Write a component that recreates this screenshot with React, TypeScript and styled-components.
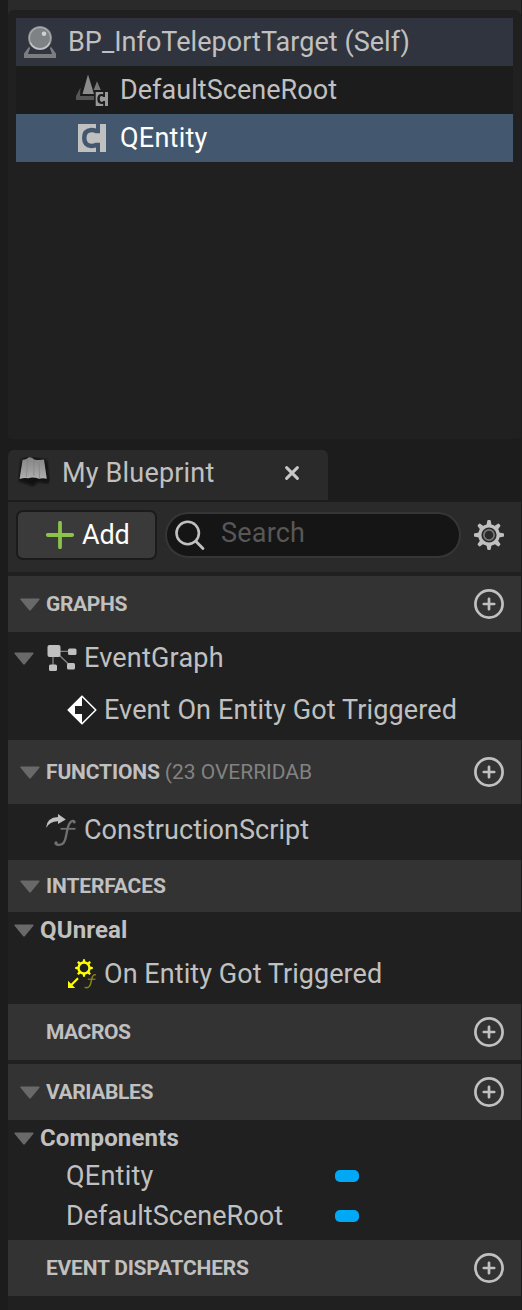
import React from "react";
import styled, { createGlobalStyle } from "styled-components";

const GlobalStyle = createGlobalStyle`
  *, *::before, *::after { box-sizing: border-box; }
  body {
    margin: 0;
    background: #1c1c1c;
    color: #c0c0c0;
    font-family: Roboto, "Liberation Sans", sans-serif;
    font-size: 27px;
  }
`;

const Editor = styled.main`
  width: 522px;
  height: 1310px;
  padding: 0 1px 0 8px;
  display: flex;
  flex-direction: column;
  overflow: hidden;
`;

const ComponentsPanel = styled.section`
  height: 439px;
  padding-top: 10px;
  background: linear-gradient(#2a2a2a 40px, #202020 40px);
  border-radius: 0 0 4px 4px;
`;

const TreeWell = styled.div`
  height: 429px;
  padding: 8px;
  border-radius: 6px;
  background: #202020;
`;

const TreeRow = styled.div<{ $bg: string; $indent: number; $gap: number; $selected?: boolean }>`
  height: 48px;
  display: flex;
  align-items: center;
  gap: ${(p) => p.$gap}px;
  padding-left: ${(p) => p.$indent}px;
  background: ${(p) => p.$bg};
  color: ${(p) => (p.$selected ? "#ffffff" : "#c0c0c0")};
`;

const Label = styled.span<{ $spacing?: number }>`
  line-height: 32px;
  white-space: nowrap;
  letter-spacing: ${(p) => p.$spacing ?? 0.04}px;
`;

const Tab = styled.div`
  width: 320px;
  height: 50px;
  margin-top: 11px;
  padding: 0 28px 4px 10px;
  display: flex;
  align-items: center;
  background: #2a2a2a;
  border-radius: 6px 6px 0 0;
`;

const TabTitle = styled(Label)`
  flex: 1;
  margin-left: 12px;
`;

const Toolbar = styled.div`
  height: 70px;
  margin-top: 2px;
  padding: 0 16px 4px 8px;
  display: flex;
  align-items: center;
  background: #2a2a2a;
`;

const AddButton = styled.button`
  width: 141px;
  height: 50px;
  padding: 0 0 0 28px;
  display: flex;
  align-items: center;
  gap: 8px;
  border: 2px solid #1b1b1b;
  border-radius: 7px;
  background: #3a3a3a;
  color: #ffffff;
  font: inherit;
`;

const SearchBox = styled.div`
  width: 296px;
  height: 46px;
  margin: 0 13px 0 8px;
  padding: 0 0 0 7px;
  display: flex;
  align-items: center;
  gap: 15px;
  border: 2px solid #363636;
  border-radius: 23px;
  background: #151515;
  color: #575757;
`;

const SearchLabel = styled(Label)`
  padding-bottom: 4px;
`;

const Sections = styled.div`
  flex: 1;
  padding-top: 4px;
  background: #202020;
`;

const Header = styled.header<{ $h: number; $gap?: number }>`
  height: ${(p) => p.$h}px;
  margin-top: ${(p) => p.$gap ?? 0}px;
  padding: 0 17px 0 12px;
  display: flex;
  align-items: center;
  background: #333333;
`;

const HeaderTitle = styled.h2<{ $spacing?: number }>`
  margin: 0 0 0 6px;
  font-size: 21px;
  font-weight: 700;
  line-height: 28px;
  letter-spacing: ${(p) => p.$spacing ?? 0}px;
  white-space: nowrap;
`;

const HeaderNote = styled.span`
  margin-left: 5px;
  color: #828282;
  font-size: 21px;
  line-height: 28px;
  letter-spacing: -0.02px;
  white-space: nowrap;
`;

const ArrowSlot = styled.span`
  width: 20px;
  height: 13px;
  display: flex;
`;

const Push = styled.span`
  margin-left: auto;
  display: flex;
`;

const ItemRow = styled.div<{ $h: number; $indent: number; $below?: number }>`
  height: ${(p) => p.$h}px;
  margin-bottom: ${(p) => p.$below ?? 0}px;
  padding-left: ${(p) => p.$indent}px;
  display: flex;
  align-items: center;
`;

const IconSlot = styled.span<{ $ml?: number; $mr: number }>`
  display: flex;
  margin: 0 ${(p) => p.$mr}px 0 ${(p) => p.$ml ?? 0}px;
`;

const Category = styled.h3`
  margin: 0 0 0 6px;
  font-size: 24px;
  font-weight: 700;
  line-height: 30px;
  letter-spacing: 0.15px;
`;

const VariableName = styled(Label)`
  width: 269px;
`;

const TypePill = styled.span`
  width: 24px;
  height: 12px;
  border-radius: 5px;
  background: #00a8f6;
`;

const Arrow = () => (
  <svg width="20" height="13" viewBox="0 0 20 13">
    <path d="M1.3 0.5H18.7Q20.3 0.7 19.2 2.1L11 11.9Q10 13 9 11.9L0.8 2.1Q-0.3 0.7 1.3 0.5Z" fill="#696969" />
  </svg>
);

const ActorIcon = () => (
  <svg width="32" height="32" viewBox="0 0 32 32">
    <path d="M5.2 20.5L0 27.5V32H32V27.5L26.8 20.5L26 22.5L28 28H4L6 22.5Z" fill="#7b7d80" />
    <circle cx="16" cy="12" r="12" fill="#7f8284" />
    <circle cx="16" cy="12" r="10.6" fill="#7f8284" stroke="#a9abac" strokeWidth="1.1" />
    <path d="M6.2 16.5A10.6 10.6 0 0 0 25.8 16.5" fill="none" stroke="#c6c7c8" strokeWidth="1.3" />
    <circle cx="20" cy="7.7" r="2.3" fill="#d0d0d0" />
  </svg>
);

const ComponentGlyph = ({ size, fill, cut }: { size: number; fill: string; cut: string }) => (
  <svg width={size} height={size} viewBox="0 0 28 28">
    <path d="M0 0H28V28H0Z" fill={fill} />
    <path
      d="M18 0H22V9.2H17.6Q16 8.2 13.4 8.2Q8.5 8.4 8.5 14Q8.5 19.6 13.4 19.8Q16 19.8 17.6 18.8H22V28H18V23.4Q16 24.2 13 24.2Q4 23.5 4 14Q4 4.5 13 3.8Q16 3.8 18 4.6Z"
      fill={cut}
    />
  </svg>
);

const SceneIcon = () => (
  <svg width="32" height="32" viewBox="0 0 32 32">
    <path d="M0 22L4.5 13.5L4 22H18V26H0Z" fill="#555555" />
    <path d="M12 0.5L18 20H6.5Z" fill="#8c8c8c" />
    <path d="M21 7.3L24.8 16H17.6Z" fill="#777777" />
    <path d="M19.7 18H32V32H19.7Z" fill="#999999" />
    <path d="M27.2 18H29V23H27.3Q26.6 22.1 25.5 22.1Q23.8 22.1 23.8 25Q23.8 27.9 25.5 27.9Q26.6 27.9 27.3 27H29V32H27.2V29.7Q21.3 30.8 21.3 25Q21.3 19.2 27.2 20.2Z" fill="#1c1c1c" />
  </svg>
);

const BlueprintIcon = () => (
  <svg width="32" height="32" viewBox="0 0 32 32">
    <defs>
      <linearGradient id="sheet" x1="0" y1="0" x2="0" y2="1">
        <stop offset="0" stopColor="#858585" />
        <stop offset="0.5" stopColor="#989898" />
        <stop offset="1" stopColor="#b0b0b0" />
      </linearGradient>
      <filter id="soft" x="-30%" y="-30%" width="160%" height="160%">
        <feGaussianBlur stdDeviation="1.2" />
      </filter>
      <filter id="fold" x="-10%" y="-10%" width="120%" height="120%">
        <feGaussianBlur stdDeviation="0.5" />
      </filter>
    </defs>
    <path d="M3 3L10 0L29 3L31 26L20 25L15 29L7 26L1 24Z" fill="#080808" opacity="0.85" filter="url(#soft)" />
    <g filter="url(#fold)">
      <path d="M4.6 2.8Q8 3 10.5 0.4Q14 0 16 2.4Q21 3.6 26 2.6L28.8 21.8Q25 20.8 21 21.8Q15 19.6 10.5 21.2Q6 20.4 1.6 22Z" fill="url(#sheet)" />
      <path d="M9.5 3L8.5 20M16 4L15.8 19M21 5L21.6 21" stroke="#7d7d7d" strokeWidth="1" opacity="0.6" />
    </g>
  </svg>
);

const CloseIcon = () => (
  <svg width="16" height="16" viewBox="0 0 16 16">
    <path d="M2.6 2.6L13.4 13.4M13.4 2.6L2.6 13.4" stroke="#c8c8c8" strokeWidth="3" strokeLinecap="round" />
  </svg>
);

const AddIcon = () => (
  <svg width="28" height="28" viewBox="0 0 28 28">
    <path d="M14 1.8V26.2M1.8 14H26.2" stroke="#8bc24a" strokeWidth="3.8" strokeLinecap="round" />
  </svg>
);

const SearchIcon = () => (
  <svg width="32" height="32" viewBox="0 0 32 32">
    <circle cx="13.7" cy="14" r="11.2" fill="none" stroke="#c0c0c0" strokeWidth="2.6" />
    <path d="M21.8 22.2L29 29.5" stroke="#c0c0c0" strokeWidth="2.8" strokeLinecap="round" />
  </svg>
);

const teeth = [0, 45, 90, 135, 180, 225, 270, 315];

const GearIcon = () => (
  <svg width="30" height="30" viewBox="0 0 30 30">
    <circle cx="15" cy="15" r="9.2" fill="none" stroke="#c0c0c0" strokeWidth="3.2" />
    {teeth.map((a) => (
      <path key={a} d="M12.4 5.5L13.3 0.8Q13.5 0 14.3 0H15.7Q16.5 0 16.7 0.8L17.6 5.5Z" fill="#c0c0c0" transform={`rotate(${a} 15 15)`} />
    ))}
    <circle cx="15" cy="15" r="5.1" fill="none" stroke="#777777" strokeWidth="1.7" />
  </svg>
);

const PlusCircle = () => (
  <svg width="30" height="30" viewBox="0 0 30 30">
    <circle cx="15" cy="15" r="13.6" fill="none" stroke="#c0c0c0" strokeWidth="2.7" />
    <path d="M15 9.8V20.2M9.8 15H20.2" stroke="#c0c0c0" strokeWidth="2.7" strokeLinecap="round" />
  </svg>
);

const GraphIcon = () => (
  <svg width="30" height="28" viewBox="0 0 30 28">
    <path d="M12 7.3H22M6 12V21M12 11L22 20.5" stroke="#858585" strokeWidth="1.3" fill="none" />
    <rect x="0.5" y="1" width="13" height="12" rx="2" fill="#c0c0c0" />
    <rect x="21" y="4.5" width="8.5" height="6.5" rx="1.5" fill="#c0c0c0" />
    <rect x="2" y="20.5" width="8" height="6.5" rx="1.5" fill="#c0c0c0" />
    <rect x="20" y="19" width="8" height="6.5" rx="1.5" fill="#c0c0c0" />
  </svg>
);

const EventIcon = () => (
  <svg width="30" height="30" viewBox="0 0 30 30">
    <path d="M15 1.2L28.8 15L15 28.8L1.2 15Z" fill="#202020" stroke="#ffffff" strokeWidth="1.6" strokeLinejoin="round" />
    <path d="M15 1L1 15L15 29V19H8V11H15Z" fill="#ffffff" />
  </svg>
);

const ConstructionIcon = () => (
  <svg width="30" height="32" viewBox="0 0 30 32">
    <path d="M0 14Q1 3.4 12 3.1V0L19.8 5.6L12 10V7.2Q4 7 0 14Z" fill="#c0c0c0" />
    <path d="M28.6 7.8Q27 6 25 7.6Q22.8 9.4 21.6 14.6L19.6 24Q18.3 30 14.5 30.7Q11 31.3 9.4 29.4" fill="none" stroke="#707070" strokeWidth="2.3" />
    <path d="M14.5 14.8H29.5" stroke="#707070" strokeWidth="1.8" />
    <circle cx="10" cy="29" r="1.7" fill="#707070" />
    <circle cx="28.2" cy="8" r="1.5" fill="#707070" />
  </svg>
);

const InterfaceIcon = () => (
  <svg width="30" height="30" viewBox="0 0 30 30">
    <circle cx="17" cy="9" r="5.5" fill="none" stroke="#ffff00" strokeWidth="2.4" />
    {teeth.map((a) => (
      <path key={a} d="M15.6 3.5L16 0.2H18L18.4 3.5Z" fill="#ffff00" transform={`rotate(${a} 17 9)`} />
    ))}
    <path d="M11 19.2L4.5 25.7" stroke="#ffff00" strokeWidth="2.2" />
    <path d="M1 21.8V29H8.2Z" fill="#ffff00" />
    <path d="M28.8 16Q27 14.9 25.5 17.5Q24.8 19.3 23.8 24.2Q23 27.8 20.5 28.6Q18.8 28.9 17.7 28" fill="none" stroke="#8a8512" strokeWidth="1.5" />
    <path d="M20.8 20.2H28.5" stroke="#8a8512" strokeWidth="1.2" />
  </svg>
);

const SectionHeader = ({ title, height = 56, gap, open, note, addable = true, spacing }: {
  title: string;
  height?: number;
  gap?: number;
  open?: boolean;
  note?: string;
  addable?: boolean;
  spacing?: number;
}) => (
  <Header $h={height} $gap={gap}>
    <ArrowSlot>{open && <Arrow />}</ArrowSlot>
    <HeaderTitle $spacing={spacing}>{title}</HeaderTitle>
    {note && <HeaderNote>{note}</HeaderNote>}
    {addable && <Push><PlusCircle /></Push>}
  </Header>
);

export default function App() {
  return (
    <>
      <GlobalStyle />
      <Editor>
        <ComponentsPanel>
          <TreeWell>
            <TreeRow $bg="#30343e" $indent={8} $gap={12}>
              <ActorIcon />
              <Label>BP_InfoTeleportTarget (Self)</Label>
            </TreeRow>
            <TreeRow $bg="#1c1c1c" $indent={60} $gap={12}>
              <SceneIcon />
              <Label>DefaultSceneRoot</Label>
            </TreeRow>
            <TreeRow $bg="#43586e" $indent={62} $gap={14} $selected>
              <ComponentGlyph size={28} fill="#c0c0c0" cut="#43586e" />
              <Label $spacing={0.25}>QEntity</Label>
            </TreeRow>
          </TreeWell>
        </ComponentsPanel>

        <Tab>
          <BlueprintIcon />
          <TabTitle $spacing={0.18}>My Blueprint</TabTitle>
          <CloseIcon />
        </Tab>
        <Toolbar>
          <AddButton><AddIcon /><Label $spacing={-0.2}>Add</Label></AddButton>
          <SearchBox><SearchIcon /><SearchLabel $spacing={0.2}>Search</SearchLabel></SearchBox>
          <GearIcon />
        </Toolbar>

        <Sections>
          <SectionHeader title="GRAPHS" spacing={-0.35} open />
          <ItemRow $h={52} $indent={6}>
            <Arrow />
            <IconSlot $ml={13} $mr={7}><GraphIcon /></IconSlot>
            <Label $spacing={0.2}>EventGraph</Label>
          </ItemRow>
          <ItemRow $h={52} $indent={59} $below={4}>
            <IconSlot $mr={7}><EventIcon /></IconSlot>
            <Label $spacing={0.12}>Event On Entity Got Triggered</Label>
          </ItemRow>

          <SectionHeader title="FUNCTIONS" note="(23 OVERRIDAB" spacing={-0.13} height={64} open />
          <ItemRow $h={52} $indent={38} $below={4}>
            <IconSlot $mr={8}><ConstructionIcon /></IconSlot>
            <Label>ConstructionScript</Label>
          </ItemRow>

          <SectionHeader title="INTERFACES" spacing={-0.13} height={52} open addable={false} />
          <ItemRow $h={36} $indent={6}>
            <Arrow />
            <Category>QUnreal</Category>
          </ItemRow>
          <ItemRow $h={52} $indent={59} $below={4}>
            <IconSlot $mr={7}><InterfaceIcon /></IconSlot>
            <Label $spacing={0.06}>On Entity Got Triggered</Label>
          </ItemRow>

          <SectionHeader title="MACROS" spacing={-0.45} />
          <SectionHeader title="VARIABLES" spacing={-0.38} gap={4} open />
          <ItemRow $h={36} $indent={6}>
            <Arrow />
            <Category>Components</Category>
          </ItemRow>
          <ItemRow $h={40} $indent={58}>
            <VariableName $spacing={0.25}>QEntity</VariableName>
            <TypePill />
          </ItemRow>
          <ItemRow $h={40} $indent={58}>
            <VariableName>DefaultSceneRoot</VariableName>
            <TypePill />
          </ItemRow>
          <SectionHeader title="EVENT DISPATCHERS" spacing={-0.22} gap={4} />
        </Sections>
      </Editor>
    </>
  );
}
